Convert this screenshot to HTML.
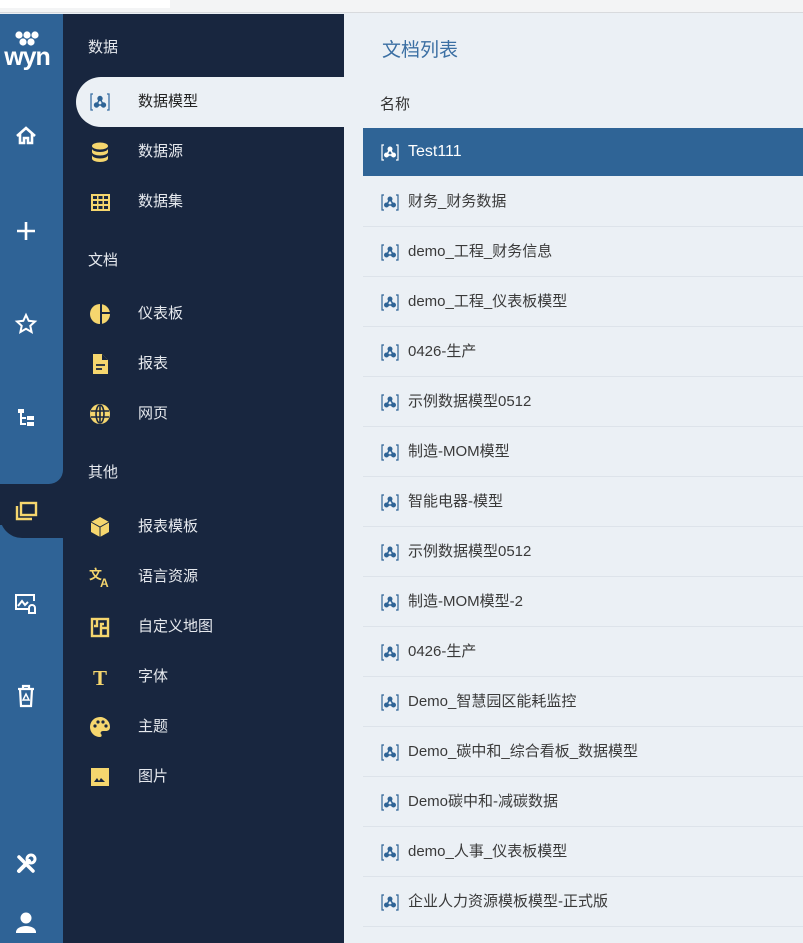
<!DOCTYPE html>
<html><head><meta charset="utf-8"><style>
*{margin:0;padding:0;box-sizing:border-box}
body{width:803px;height:943px;overflow:hidden;background:#ebf0f5;font-family:"Liberation Sans","Noto Sans CJK SC",sans-serif;position:relative}
.top{position:absolute;left:0;top:0;width:803px;height:13px;background:#f3f4f5;border-bottom:1px solid #d8dadd}
.top .w{position:absolute;left:0;top:0;width:170px;height:8px;background:#fff}
.rail{position:absolute;left:0;top:14px;width:63px;height:929px;background:#2f6396}
.panel{position:absolute;left:63px;top:14px;width:281px;height:929px;background:#18263f}
.ri{position:absolute;left:13px;width:26px;height:26px}
.sec{position:absolute;left:88px;color:#e6e9ee;font-size:15px}
.mi{position:absolute;left:76px;width:268px;height:50px;color:#e6e9ee;font-size:15px;line-height:50px}
.mi span{position:absolute;left:62px}
.mi svg{position:absolute;left:13px;top:14px}
.mi.act{background:#ebf0f5;border-radius:25px 0 0 25px;color:#222}
.title{position:absolute;left:382px;top:35px;font-size:19px;color:#3b6fa3}
.hdr{position:absolute;left:380px;top:93px;font-size:15px;color:#333}
.row{position:absolute;left:363px;width:440px;height:50px;border-bottom:1px solid #dde3ea;font-size:15px;color:#3a3a3a;line-height:50px}
.row svg{position:absolute;left:17px;top:15px}
.row span{position:absolute;left:45px}
.row.sel{background:#2f6496;color:#fff;border:none;height:48px;line-height:48px;font-size:16px}
.row.sel svg{top:14px}
</style></head><body>
<div class="top"><div class="w"></div></div>
<div class="rail"></div>
<div class="panel"></div>
<!-- active rail tab -->
<div style="position:absolute;left:0;top:470px;width:63px;height:82px;background:#18263f"></div>
<div style="position:absolute;left:0;top:470px;width:63px;height:14px;background:#2f6396;border-bottom-right-radius:14px"></div>
<div style="position:absolute;left:0;top:525px;width:63px;height:27px;background:#2f6396;border-top-right-radius:14px"></div>
<div style="position:absolute;left:0;top:484px;width:63px;height:54px;background:#18263f;border-radius:0 0 0 22px"></div>
<!-- logo -->
<svg style="position:absolute;left:1px;top:30px" width="52" height="44" viewBox="0 0 52 44">
<g fill="#fff"><circle cx="18" cy="5" r="3.6"/><circle cx="26" cy="5" r="3.6"/><circle cx="34" cy="5" r="3.6"/><circle cx="22" cy="12" r="3.6"/><circle cx="30" cy="12" r="3.6"/></g>
<text x="26" y="35" text-anchor="middle" fill="#fff" font-size="25" font-weight="bold" font-family="Liberation Sans" letter-spacing="-1">wyn</text></svg>
<!-- rail icons -->
<svg class="ri" style="top:123px" viewBox="0 0 26 26" fill="none" stroke="#fff" stroke-width="2.6"><path d="M4 13 13 5l9 8M7 11v9h4v-5h4v5h4v-9"/></svg>
<svg class="ri" style="top:218px" viewBox="0 0 26 26" stroke="#fff" stroke-width="2.6"><path d="M13 4v18M4 13h18"/></svg>
<svg class="ri" style="top:311px" viewBox="0 0 26 26" fill="none" stroke="#fff" stroke-width="2"><path d="M13 4l2.7 5.8 6.3.7-4.7 4.3 1.3 6.2L13 17.8 7.4 21l1.3-6.2L4 10.5l6.3-.7z"/></svg>
<svg class="ri" style="top:404px" viewBox="0 0 26 26" fill="#fff"><rect x="5" y="5" width="6" height="4"/><rect x="7" y="9" width="2" height="12"/><rect x="7" y="13" width="6" height="2"/><rect x="7" y="19" width="6" height="2"/><rect x="14" y="12" width="7" height="4"/><rect x="14" y="18" width="7" height="4"/></svg>
<svg class="ri" style="top:498px" viewBox="0 0 26 26" fill="none" stroke="#f5d66e" stroke-width="2.4"><rect x="8" y="5" width="15" height="12"/><path d="M4 8v13h15"/></svg>
<svg class="ri" style="top:591px" viewBox="0 0 26 26" fill="none" stroke="#fff" stroke-width="2"><path d="M15 18H3V4h18v6"/><path d="M5 15l4-5 3 4 3-3"/><path d="M15 22h8M16 21v-4a3 3 0 016 0v4"/></svg>
<svg class="ri" style="top:683px" viewBox="0 0 26 26" fill="none" stroke="#fff" stroke-width="2.2"><path d="M5 6h16M10 6V3h6v3M7 6l1 17h10l1-17"/><path d="M13 11l-3 6h6z" stroke-width="1.5"/></svg>
<svg class="ri" style="top:851px" viewBox="0 0 26 26" fill="none" stroke="#fff" stroke-linecap="round"><path d="M6 20 16 10" stroke-width="4"/><circle cx="18" cy="8" r="4" stroke-width="3"/><path d="M6 6l14 14" stroke-width="3.5"/></svg>
<svg class="ri" style="top:910px" viewBox="0 0 26 26" fill="#fff"><circle cx="13" cy="8" r="5.5"/><path d="M3 22a10 6 0 0120 0v1H3z"/></svg>
<!-- panel menu -->
<div class="sec" style="top:36px">数据</div>
<div class="mi act" style="top:77px"><svg width="22" height="22" viewBox="0 0 22 22"><path d="M4 3H2v16h2M18 3h2v16h-2" fill="none" stroke="#3b6fa3" stroke-width="1.3"/><g fill="#2f6496" stroke="#2f6496" stroke-width="1.4"><circle cx="11" cy="7.5" r="2"/><circle cx="7.5" cy="14" r="2"/><circle cx="14.5" cy="14" r="2"/><path d="M11 7.5 7.5 14h7z" fill="none"/></g></svg><span>数据模型</span></div>
<div class="mi" style="top:127px"><svg width="22" height="22" viewBox="0 0 22 22" fill="#f5d66e"><ellipse cx="11" cy="5" rx="8" ry="3.5"/><path d="M3 7.5c0 2 3.6 3.5 8 3.5s8-1.5 8-3.5V11c0 2-3.6 3.5-8 3.5S3 13 3 11zM3 14c0 2 3.6 3.5 8 3.5s8-1.5 8-3.5v3.5c0 2-3.6 3.5-8 3.5s-8-1.5-8-3.5z"/></svg><span>数据源</span></div>
<div class="mi" style="top:177px"><svg width="22" height="22" viewBox="0 0 22 22"><rect x="2" y="3" width="19" height="17" fill="#f5d66e"/><g fill="#18263f"><rect x="4" y="5" width="4" height="3"/><rect x="9.5" y="5" width="4" height="3"/><rect x="15" y="5" width="4" height="3"/><rect x="4" y="10" width="4" height="3"/><rect x="9.5" y="10" width="4" height="3"/><rect x="15" y="10" width="4" height="3"/><rect x="4" y="15" width="4" height="3"/><rect x="9.5" y="15" width="4" height="3"/><rect x="15" y="15" width="4" height="3"/></g></svg><span>数据集</span></div>
<div class="sec" style="top:249px">文档</div>
<div class="mi" style="top:289px"><svg width="22" height="22" viewBox="0 0 22 22"><circle cx="11" cy="11" r="10" fill="#f5d66e"/><path d="M12 1v20M12 10h9" stroke="#18263f" stroke-width="2"/></svg><span>仪表板</span></div>
<div class="mi" style="top:339px"><svg width="22" height="22" viewBox="0 0 22 22"><path d="M4 1h9l6 6v14H4z" fill="#f5d66e"/><path d="M13 1v6h6" fill="#18263f"/><path d="M7 12h9M7 16h6" stroke="#18263f" stroke-width="1.8"/></svg><span>报表</span></div>
<div class="mi" style="top:389px"><svg width="22" height="22" viewBox="0 0 22 22"><circle cx="11" cy="11" r="10" fill="#f5d66e"/><g fill="none" stroke="#18263f" stroke-width="1.6"><ellipse cx="11" cy="11" rx="4" ry="9"/><path d="M2 8h18M2 14h18M11 2v18"/></g></svg><span>网页</span></div>
<div class="sec" style="top:461px">其他</div>
<div class="mi" style="top:502px"><svg width="22" height="22" viewBox="0 0 22 22"><path d="M11 1l9 5v10l-9 5-9-5V6z" fill="#f5d66e"/><path d="M2 6l9 5 9-5M11 11v10" fill="none" stroke="#18263f" stroke-width="1"/></svg><span>报表模板</span></div>
<div class="mi" style="top:552px"><svg width="24" height="22" viewBox="0 0 24 22"><text x="0" y="13" font-size="13" font-weight="bold" fill="#f5d66e" font-family="Noto Sans CJK SC">文</text><text x="11" y="21" font-size="12" font-weight="bold" fill="#f5d66e" font-family="Liberation Sans">A</text></svg><span>语言资源</span></div>
<div class="mi" style="top:602px"><svg width="22" height="22" viewBox="0 0 22 22" fill="none" stroke="#f5d66e" stroke-width="2.4"><rect x="3" y="3" width="16" height="17"/><path d="M8 3v7H5M12 20v-8h7M12 12V8h3"/></svg><span>自定义地图</span></div>
<div class="mi" style="top:652px"><svg width="22" height="22" viewBox="0 0 22 22"><text x="11" y="19" text-anchor="middle" font-size="21" font-weight="bold" fill="#f5d66e" font-family="Liberation Serif">T</text></svg><span>字体</span></div>
<div class="mi" style="top:702px"><svg width="22" height="22" viewBox="0 0 22 22"><path d="M11 1a10 10 0 000 20c2 0 2-2 1-3s0-3 2-3h3c2 0 4-1 4-4C21 5 16 1 11 1z" fill="#f5d66e"/><g fill="#18263f"><circle cx="6" cy="10" r="1.6"/><circle cx="9" cy="6" r="1.6"/><circle cx="14" cy="6" r="1.6"/><circle cx="17" cy="10" r="1.6"/></g></svg><span>主题</span></div>
<div class="mi" style="top:752px"><svg width="22" height="22" viewBox="0 0 22 22"><rect x="2" y="2" width="18" height="18" fill="#f5d66e"/><path d="M5 16l3-4 2 3 2-3 4 4z" fill="#18263f"/></svg><span>图片</span></div>
<!-- content -->
<div class="title">文档列表</div>
<div class="hdr">名称</div>
<svg width="0" height="0" style="position:absolute"><defs><g id="mi"><path d="M4 3H2v15h2M16 3h2v15h-2" fill="none" stroke-width="1.2"/><circle cx="10" cy="7" r="2"/><circle cx="6.5" cy="13" r="2"/><circle cx="13.5" cy="13" r="2"/><path d="M10 7 6.5 13h7z" fill="none" stroke-width="1.5"/></g></defs></svg>
<div class="row sel" style="top:128px"><svg width="20" height="20" fill="#fff" stroke="#fff"><use href="#mi"/></svg><span>Test111</span></div>
<div class="row" style="top:177px"><svg width="20" height="20" fill="#2f6496" stroke="#2f6496"><use href="#mi"/></svg><span>财务_财务数据</span></div>
<div class="row" style="top:227px"><svg width="20" height="20" fill="#2f6496" stroke="#2f6496"><use href="#mi"/></svg><span>demo_工程_财务信息</span></div>
<div class="row" style="top:277px"><svg width="20" height="20" fill="#2f6496" stroke="#2f6496"><use href="#mi"/></svg><span>demo_工程_仪表板模型</span></div>
<div class="row" style="top:327px"><svg width="20" height="20" fill="#2f6496" stroke="#2f6496"><use href="#mi"/></svg><span>0426-生产</span></div>
<div class="row" style="top:377px"><svg width="20" height="20" fill="#2f6496" stroke="#2f6496"><use href="#mi"/></svg><span>示例数据模型0512</span></div>
<div class="row" style="top:427px"><svg width="20" height="20" fill="#2f6496" stroke="#2f6496"><use href="#mi"/></svg><span>制造-MOM模型</span></div>
<div class="row" style="top:477px"><svg width="20" height="20" fill="#2f6496" stroke="#2f6496"><use href="#mi"/></svg><span>智能电器-模型</span></div>
<div class="row" style="top:527px"><svg width="20" height="20" fill="#2f6496" stroke="#2f6496"><use href="#mi"/></svg><span>示例数据模型0512</span></div>
<div class="row" style="top:577px"><svg width="20" height="20" fill="#2f6496" stroke="#2f6496"><use href="#mi"/></svg><span>制造-MOM模型-2</span></div>
<div class="row" style="top:627px"><svg width="20" height="20" fill="#2f6496" stroke="#2f6496"><use href="#mi"/></svg><span>0426-生产</span></div>
<div class="row" style="top:677px"><svg width="20" height="20" fill="#2f6496" stroke="#2f6496"><use href="#mi"/></svg><span>Demo_智慧园区能耗监控</span></div>
<div class="row" style="top:727px"><svg width="20" height="20" fill="#2f6496" stroke="#2f6496"><use href="#mi"/></svg><span>Demo_碳中和_综合看板_数据模型</span></div>
<div class="row" style="top:777px"><svg width="20" height="20" fill="#2f6496" stroke="#2f6496"><use href="#mi"/></svg><span>Demo碳中和-减碳数据</span></div>
<div class="row" style="top:827px"><svg width="20" height="20" fill="#2f6496" stroke="#2f6496"><use href="#mi"/></svg><span>demo_人事_仪表板模型</span></div>
<div class="row" style="top:877px"><svg width="20" height="20" fill="#2f6496" stroke="#2f6496"><use href="#mi"/></svg><span>企业人力资源模板模型-正式版</span></div>
</body></html>
